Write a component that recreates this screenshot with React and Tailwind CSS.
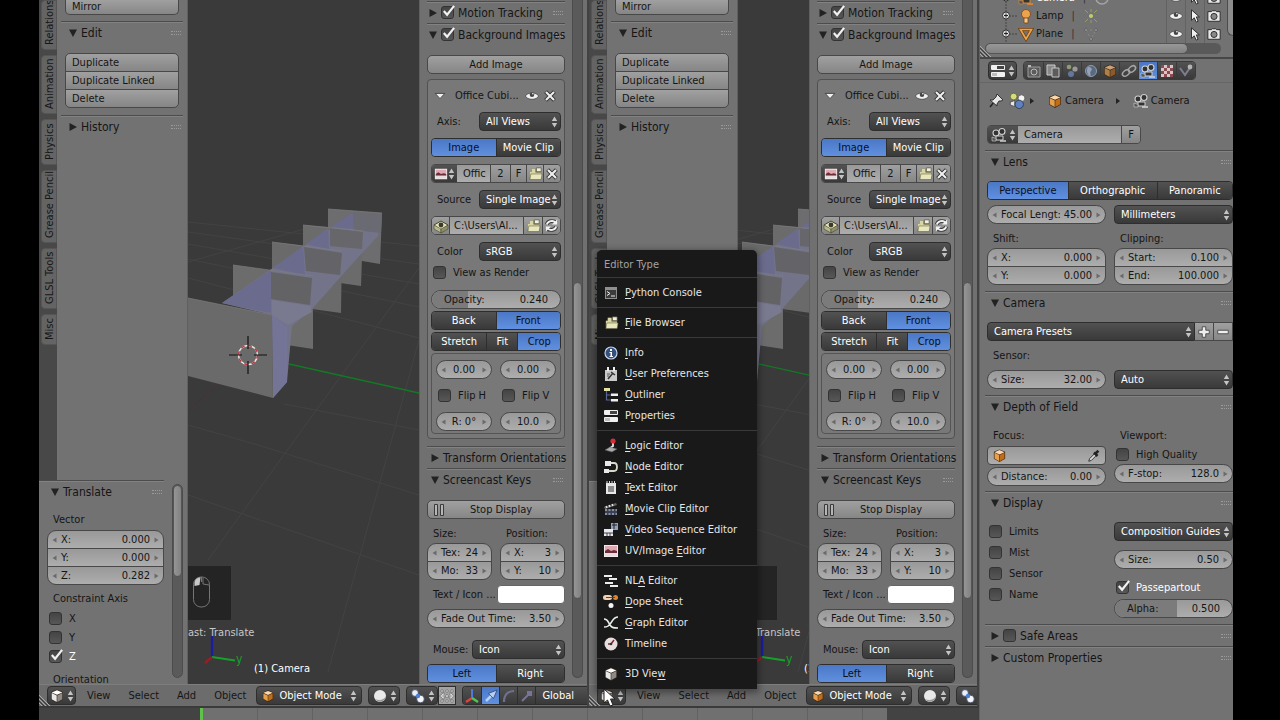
import React from 'react';

const darkBg = 'bg-linear-to-b from-[#525252] to-[#393939]';
const toolBg = 'bg-linear-to-b from-[#a0a0a0] to-[#868686]';
const fieldBg = 'bg-linear-to-b from-[#999999] to-[#adadad]';
const blueBg = 'bg-linear-to-b from-[#4a78c6] to-[#6190e0]';

/* ---------- icons ---------- */

const Svg = ({ children, size = 16 }) => (
  <svg width={size} height={size} viewBox="0 0 16 16" className="shrink-0" aria-hidden="true">
    {children}
  </svg>
);

const CubeIcon = ({ size = 16, top = '#f8d8ac', left = '#e9a04c', right = '#c06c18' }) => (
  <Svg size={size}>
    <path d="M8 1.5 14 4v7.5L8 15 2 11.5V4z" fill="#3a2a1a" />
    <path d="M8 2.2 13.3 4.4 8 6.8 2.7 4.4z" fill={top} />
    <path d="M2.7 5.1 7.7 7.4v6.6L2.7 11.2z" fill={left} />
    <path d="M13.3 5.1 8.3 7.4v6.6l5-2.8z" fill={right} />
  </Svg>
);

const ViewIcon = () => <CubeIcon top="#ffffff" left="#e8e8e8" right="#8a8a8a" />;

const UpDown = () => (
  <svg width="7" height="12" viewBox="0 0 7 12" className="shrink-0" aria-hidden="true">
    <path d="M3.5 0.5 6.2 5H0.8z M3.5 11.5 6.2 7H0.8z" fill="#c4c4c4" />
  </svg>
);

const EyeIcon = () => (
  <Svg size={14}>
    <path d="M0.500 8c2-4.500 13-4.500 15 0-2 5-13 5-15 0z" fill="#f2f2f2" stroke="#3a3a3a" strokeWidth="0.8" />
    <circle cx="8" cy="6.500" r="2.6" fill="#444" />
    <circle cx="9" cy="5.500" r="0.9" fill="#fff" />
  </Svg>
);

const CrossIcon = () => (
  <Svg size={14}>
    <path d="M3 3l10 10M13 3 3 13" stroke="#333" strokeWidth="4.5" />
    <path d="M3.4 3.4l9.2 9.2M12.6 3.4 3.4 12.6" stroke="#efefef" strokeWidth="2.4" />
  </Svg>
);

const FolderIcon = () => (
  <Svg size={15}>
    <path d="M2 14V6h2V3h5v2h5v9z" fill="#53523a" />
    <path d="M2 12V6h2V3h4v4h6v6H3z" fill="#d9d6a2" />
    <path d="M9 2h5v4H9z" fill="#f1f1e2" stroke="#55543f" strokeWidth="0.7" />
    <path d="M3 8.500h12l-1 6H2z" fill="#e9e7bd" stroke="#5f5e42" strokeWidth="0.6" />
  </Svg>
);

const RefreshIcon = () => (
  <Svg size={15}>
    <g fill="none" stroke="#3a3a3a" strokeWidth="4">
      <path d="M3 7c1-4 7-5 10-2M13 9c-1 4-7 5-10 2" />
    </g>
    <g fill="none" stroke="#f2f2f2" strokeWidth="2">
      <path d="M3 7c1-4 7-5 9-2M13 9c-1 4-7 5-9 2" />
    </g>
    <path d="M14 1.5V7H8.5zM2 14.500V9h5.500z" fill="#f2f2f2" />
  </Svg>
);

const ImageIcon = ({ size = 16 }) => (
  <Svg size={size}>
    <path d="M1 2h14v12H1z" fill="#f2e9ea" />
    <path d="M2 3h12v5H2z" fill="#e0a8b0" />
    <path d="M2 8l3-2 3 2 3-1 3 1v2H2z" fill="#6b2e3b" />
    <path d="M2 10h12v3H2z" fill="#e6dede" />
  </Svg>
);

const PackIcon = () => (
  <Svg size={16}>
    <path d="M1 7l7-4 7 4-7 6z" fill="#e4e4bd" stroke="#444431" />
    <path d="M1 7l7 4v4L1 11z" fill="#b9b98a" stroke="#444431" strokeWidth="0.6" />
    <path d="M15 7l-7 4v4l7-4z" fill="#8f8f68" stroke="#444431" strokeWidth="0.6" />
    <circle cx="8" cy="7" r="2.400" fill="#3a3a2c" />
  </Svg>
);

const CameraIcon = ({ size = 16, color = '#d0d0d0' }) => (
  <Svg size={size}>
    <circle cx="5" cy="6" r="3" fill="#333" stroke={color} strokeWidth="1.100" />
    <circle cx="11" cy="4.500" r="3" fill="#333" stroke={color} strokeWidth="1.100" />
    <path d="M5 9h7v4H5z" fill="#333" stroke={color} strokeWidth="1" />
    <path d="M1 10l4 1.500V14H1z" fill="#555" stroke={color} strokeWidth="0.600" />
    <path d="M9 14h6" stroke={color} strokeWidth="1.600" />
  </Svg>
);

const BallsIcon = ({ size = 16 }) => (
  <Svg size={size}>
    <circle cx="5" cy="5" r="3.400" fill="#e9eef7" stroke="#38445e" strokeWidth="0.8" />
    <circle cx="10.500" cy="11" r="3.800" fill="#f4f6fa" stroke="#38445e" strokeWidth="0.8" />
    <circle cx="8" cy="8" r="2.200" fill="#4f7fd0" />
  </Svg>
);

const SceneIcon = () => (
  <Svg size={18}>
    <circle cx="5" cy="4" r="3" fill="#d4dc7c" stroke="#5c6134" strokeWidth="0.7" />
    <path d="M2 9l4-1.500V13l-4-1.500z" fill="#e9e9e9" stroke="#444" strokeWidth="0.7" />
    <circle cx="12" cy="5.500" r="3" fill="#f4f4f4" stroke="#555" strokeWidth="0.7" />
    <circle cx="10" cy="11" r="3.700" fill="#5d82bf" stroke="#27344d" strokeWidth="0.7" />
  </Svg>
);

const PropsIcon = ({ size = 16 }) => (
  <Svg size={size}>
    <rect x="1" y="2" width="14" height="5" rx="1" fill="#f0f0f0" />
    <rect x="7" y="3" width="7" height="3" fill="#444" />
    <rect x="1" y="9" width="14" height="5" rx="1" fill="#f0f0f0" />
    <rect x="2" y="10" width="5" height="3" fill="#bdbdbd" />
  </Svg>
);

const menuIcons = {
  console: (
    <Svg>
      <path d="M2 2h12v12H2z" fill="#8f8f8f" />
      <path d="M3 5h10v8H3z" fill="#3c3c3c" />
      <path d="M4 6.500l3 2-3 2M8 11h4" stroke="#eee" fill="none" />
    </Svg>
  ),
  file: <FolderIcon />,
  info: (
    <Svg>
      <circle cx="8" cy="8" r="6" fill="#33507f" stroke="#c4d4ee" strokeWidth="1.200" />
      <path d="M7 4h2v2H7zM6.500 7H9v4h1v1H6.500v-1h1V8h-1z" fill="#fff" />
    </Svg>
  ),
  prefs: (
    <Svg>
      <path d="M2 4h12v11H2z" fill="#c9c9c9" />
      <path d="M4 1h2v4H4zM10 1h2v4h-2z" fill="#eee" />
      <path d="M5 13l5-6M8 6l4 3" stroke="#333" strokeWidth="1.500" />
      <path d="M4 8h3M4 10h2" stroke="#555" />
    </Svg>
  ),
  outliner: (
    <Svg>
      <path d="M1 1h6v3H1z" fill="#e6e2a4" />
      <path d="M3.500 4v9H8M3.500 8H8" stroke="#5c6794" strokeWidth="1.200" fill="none" />
      <path d="M8 6.500h7v2.500H8zM8 12h7v2.500H8z" fill="#f0f0f0" />
    </Svg>
  ),
  props: <PropsIcon />,
  logic: (
    <Svg>
      <path d="M10 4v4L6 11" stroke="#e8e8e8" strokeWidth="1.800" fill="none" />
      <path d="M2 12l5-3 7 2-5 3z" fill="#aaa" stroke="#555" strokeWidth="0.500" />
      <circle cx="10" cy="3" r="2.600" fill="#d22f3b" />
    </Svg>
  ),
  node: (
    <Svg>
      <path d="M2 2h6v5H2zM1 10h5v4H1z" fill="#e9e9e9" />
      <path d="M8 4h3c4 0 4 8 0 8H6" stroke="#d9d9c4" strokeWidth="1.800" fill="none" />
    </Svg>
  ),
  text: (
    <Svg>
      <path d="M3 3h10v11H3z" fill="#e8e8e8" />
      <path d="M4 1v3M6.500 1v3M9 1v3M11.500 1v3" stroke="#ddd" />
      <path d="M5 7h6M5 9h6M5 11h6" stroke="#333" />
    </Svg>
  ),
  clip: (
    <Svg>
      <path d="M1 6l12-4 1 2L2 8z" fill="#666" />
      <path d="M3 5l1 2M6 4l1 2M9 3l1 2" stroke="#eee" strokeWidth="1.300" />
      <path d="M2 8h12v6H2z" fill="#39415a" />
      <path d="M2 9h12M2 13h12" stroke="#ddd" strokeDasharray="2 1.500" />
    </Svg>
  ),
  sequence: (
    <Svg>
      <path d="M8 1h7v7H8z" fill="#93a0bd" />
      <path d="M9 3h5M11 1v6" stroke="#222" />
      <path d="M1 7h9v7H1z" fill="#e9e9f2" />
      <path d="M1 11h9M4 11v3M7 11v3" stroke="#444" />
    </Svg>
  ),
  image: <ImageIcon />,
  nla: (
    <Svg>
      <path d="M1 2h8v2H1zM6 5h8v2H6zM2 9h8v2H2zM7 12h8v2H7z" fill="#ececec" />
    </Svg>
  ),
  dope: (
    <Svg>
      <rect x="0" y="1" width="9" height="5" rx="2.500" fill="#f0d0b0" />
      <circle cx="12.500" cy="3.500" r="2.500" fill="#d98638" />
      <path d="M3 3.500h9" stroke="#6b3e14" />
      <circle cx="8" cy="11.500" r="2.500" fill="#f4f4f4" />
    </Svg>
  ),
  graph: (
    <Svg>
      <path d="M1 4c4 0 4 3 6 6s4 3 8 3M15 2c-5 0-5 4-8 7-1 2-3 3-6 3" stroke="#e9efe9" strokeWidth="1.600" fill="none" />
    </Svg>
  ),
  time: (
    <Svg>
      <circle cx="8" cy="8" r="6.500" fill="#e9dedf" />
      <path d="M8 8l3-4M8 8H5" stroke="#7c2b35" strokeWidth="1.500" />
      <circle cx="8" cy="8" r="1.300" fill="#333" />
    </Svg>
  ),
  view: <ViewIcon />,
};

/* ---------- controls ---------- */

const Arrow = ({ flip }) => (
  <svg width="5" height="6" viewBox="0 0 5 6" className={`shrink-0 ${flip ? 'rotate-180' : ''}`} aria-hidden="true">
    <path d="M4.500 0.500v5L0.500 3z" fill="#6a6a6a" />
  </svg>
);

const NumField = ({ label, value, name, center, round = 'rounded-full', className = '' }) => (
  <label
    className={`flex h-[19px] min-w-0 items-center gap-0.5 border border-[#484848] px-1 ${fieldBg} ${round} ${className}`}
  >
    <Arrow />
    {label && <span className="min-w-0 flex-1 pl-0.5 whitespace-nowrap">{label}</span>}
    <input
      type="text"
      defaultValue={value}
      aria-label={label ? undefined : name}
      style={label && !center ? { width: `${value.length}ch` } : undefined}
      className={`min-w-0 bg-transparent outline-none ${center ? 'w-full flex-1 text-center' : 'mr-0.5 shrink-0 text-right'}`}
    />
    <Arrow flip />
  </label>
);

const NumStack = ({ rows }) => (
  <div className="flex flex-col">
    {rows.map(([label, value], i) => (
      <NumField
        key={label}
        label={label}
        value={value}
        className={i > 0 ? '-mt-px' : ''}
        round={i === 0 ? 'rounded-t-[9px]' : i === rows.length - 1 ? 'rounded-b-[9px]' : 'rounded-none'}
      />
    ))}
  </div>
);

const Slider = ({ label, value, fill }) => (
  <label className={`relative flex h-[19px] items-center overflow-hidden rounded-full border border-[#484848] px-3 ${fieldBg}`}>
    <span className="absolute inset-y-0 left-0 bg-[#7b7b7b]" style={{ width: `${fill}%` }} />
    <span className="relative flex-1">{label}</span>
    <input
      type="text"
      defaultValue={value}
      className="relative w-10 bg-transparent text-right outline-none"
    />
  </label>
);

const Select = ({ value, name, className = '', round = 'rounded-[4px]' }) => (
  <div className={`flex h-[19px] min-w-0 items-center border border-[#2e2e2e] pr-0.5 pl-1.5 text-white ${darkBg} ${round} ${className}`}>
    <select aria-label={name} className="min-w-0 flex-1 appearance-none bg-transparent outline-none">
      <option>{value}</option>
    </select>
    <UpDown />
  </div>
);

const Toggle = ({ items, active }) => (
  <div className="flex h-[19px] shrink-0 overflow-hidden rounded-[4px] border border-[#2e2e2e]">
    {items.map((t) => (
      <button
        key={t}
        type="button"
        className={`flex-auto border-l border-[#2e2e2e] text-center whitespace-nowrap first:border-l-0 ${
          t === active ? `${blueBg} text-[#0a0f1c]` : `${darkBg} text-white`
        } ${items.length === 2 ? 'basis-0' : ''}`}
      >
        {t}
      </button>
    ))}
  </div>
);

const Check = ({ label, name, checked, lit }) => (
  <label className="flex h-[19px] items-center gap-[7px] whitespace-nowrap">
    <span className="relative flex h-[13px] w-[13px] shrink-0">
      <input
        type="checkbox"
        defaultChecked={checked}
        aria-label={label ? undefined : name}
        className="peer h-[13px] w-[13px] appearance-none rounded-[3px] border border-[#333] bg-linear-to-b from-[#444] to-[#575757]"
      />
      <svg
        viewBox="0 0 16 16"
        className="pointer-events-none absolute -top-0.5 left-0 hidden h-[15px] w-[15px] peer-checked:block"
        aria-hidden="true"
      >
        <path d="M3 7.500l3.500 4L14 2" fill="none" stroke="#f2f2f2" strokeWidth="2.300" />
      </svg>
    </span>
    {label && <span className={lit ? 'text-white' : ''}>{label}</span>}
  </label>
);

const PanelHeader = ({ title, closed, check, className = 'px-1' }) => (
  <div className={`relative flex h-[22px] shrink-0 items-center gap-1 border-t border-[#4c4c4c] text-[12px] shadow-[inset_0_1px_0_#828282] ${className}`}>
    <svg width="8" height="8" viewBox="0 0 8 8" className={`shrink-0 ${closed ? '-rotate-90' : ''}`} aria-hidden="true">
      <path d="M0 0.500h8L4 8z" fill="#222" />
    </svg>
    {check !== undefined && <Check name={title} checked={check} />}
    <span className="absolute right-0.5 bottom-2 h-[4px] w-[10px] border-y border-dotted border-[#9a9a9a]" />
    <h2 className="relative whitespace-nowrap">{title}</h2>
  </div>
);

const Scroll = ({ className, thumb }) => (
  <div className={`w-[11px] shrink-0 rounded-full border border-[#4c4c4c] bg-[#5a5a5a] ${className}`}>
    <div className={`w-full rounded-full border border-[#555] bg-linear-to-r from-[#959595] to-[#828282] ${thumb}`} />
  </div>
);

/* ---------- tool shelf ---------- */

const tabs = [
  ['Relations', 'h-[50px]'],
  ['Animation', 'h-[59px]'],
  ['Physics', 'h-[46px]'],
  ['Grease Pencil', 'h-[73px]'],
  ['GLSL Tools', 'h-[61px]'],
  ['Misc', 'h-[31px]'],
];

const ToolShelf = () => (
  <div className="flex w-[149px] shrink-0 flex-col overflow-hidden border-r border-[#606060]">
    <div className="flex min-h-0 flex-1">
      <div className="flex w-[18px] flex-col items-end gap-[5px] bg-[#484848]">
        {tabs.map(([name, height]) => (
          <button
            key={name}
            type="button"
            className={`w-4 shrink-0 rotate-180 overflow-hidden rounded-r-[4px] border border-[#555] bg-[#646464] pt-1 text-start leading-none whitespace-nowrap text-[#161616] [writing-mode:vertical-rl] ${height}`}
          >
            {name}
          </button>
        ))}
      </div>
      <div className="flex min-w-0 flex-1 flex-col px-1">
        <div className="px-1">
          <button type="button" className={`block h-[15px] w-full rounded-b-[5px] border border-t-0 border-[#484848] px-1.5 text-left leading-[12px] ${toolBg}`}>
            Mirror
          </button>
        </div>
        <div className="mt-1.5">
          <PanelHeader title="Edit" className="px-2" />
        </div>
        <div className="mt-2.5 mb-[7px] flex flex-col px-1">
          {['Duplicate', 'Duplicate Linked', 'Delete'].map((t) => (
            <button
              key={t}
              type="button"
              className={`-mb-px h-[19px] border border-[#484848] px-1.5 text-left first:rounded-t-[5px] last:mb-0 last:rounded-b-[5px] ${toolBg}`}
            >
              {t}
            </button>
          ))}
        </div>
        <PanelHeader title="History" closed className="px-2" />
      </div>
    </div>
    <div className="flex h-[204px] shrink-0 overflow-hidden">
      <div className="min-w-0 flex-1 pr-2">
        <PanelHeader title="Translate" className="px-3" />
        <div className="mt-2 flex flex-col pl-2">
          <p className="h-5 pl-1.5 leading-5">Vector</p>
          <NumStack rows={[['X:', '0.000'], ['Y:', '0.000'], ['Z:', '0.282']]} />
          <p className="mt-1 h-5 pl-1.5 leading-5">Constraint Axis</p>
          <div className="flex flex-col pl-0.5">
            <Check label="X" />
            <Check label="Y" />
            <Check label="Z" checked lit />
          </div>
          <p className="mt-1 pl-1.5 leading-5">Orientation</p>
        </div>
      </div>
      <Scroll className="mt-1 mr-1 mb-1.5" thumb="h-[92px]" />
    </div>
  </div>
);

/* ---------- 3D canvas ---------- */

const Scene = () => (
  <svg
    viewBox="0 0 231 684"
    preserveAspectRatio="xMidYMid slice"
    className="absolute inset-0 h-full w-full"
    aria-hidden="true"
  >
    <g stroke="#434343" strokeWidth="1" fill="none">
      <path d="M0 222 231 246M0 232 231 264M0 244 231 284M0 259 231 307M0 278 231 338M0 425 70 445 231 495M0 495 231 575M96 404 231 430M231 340 140 672M231 268 20 560M190 250 0 330M120 228 0 262" />
    </g>
    <path d="M101 364 231 393" stroke="#127a24" strokeWidth="1.300" />
    <path d="M0 410 30 385" stroke="#4a3234" />
    <path d="M140 209 194 213 192 264 174 261 160 240 140 228z" fill="#6d6d70" />
    <path d="M115 225 175 230 173 286 152 283 140 250 115 246z" fill="#6b6b6c" />
    <path d="M84 242 154 250 153 313 124 309 110 280 84 270z" fill="#6a6a6b" />
    <path d="M45 265 125 276 125 349 99 345 82 300 45 298z" fill="#6c6c6d" />
    <path d="M34 303 118 245 168 212 192 224 190 236 165 263 125 308 104 326 99 382 85 398 84 315z" fill="#73738a" />
    <path d="M34 303 83 270 83 313zM85 268 115 246 117 275zM118 244 140 228 141 249zM143 227 166 212 166 229z" fill="#6b6b8e" />
    <path d="M83 272 124 278 122 305 83 299z" fill="#636366" />
    <path d="M116 247 154 253 152 275 118 271z" fill="#646468" />
    <path d="M142 228 175 232 174 249 142 246z" fill="#66666b" />
    <path d="M165 212 194 214 193 233 166 230z" fill="#6a6a72" />
    <path d="M84 300 122 306 124 312 100 325 84 315z" fill="#797990" />
    <path d="M84 315 99 327 99 382 85 398z" fill="#747496" />
    <path d="M0 298 84 315 85 398 0 376z" fill="#6a6a6b" />
    <path d="M45 265 125 276M84 242 154 251M115 225 175 231M140 209 194 213M0 298 84 315" stroke="#7e7e7e" strokeWidth="0.700" fill="none" />
    <circle cx="60" cy="355" r="9.500" fill="none" stroke="#e8e8e8" strokeWidth="1.500" />
    <circle cx="60" cy="355" r="9.500" fill="none" stroke="#c23440" strokeWidth="1.500" strokeDasharray="3.730 3.730" />
    <path d="M41 355h13M66 355h13M60 336v13M60 361v13" stroke="#111" strokeWidth="1.200" />
  </svg>
);

const Canvas = ({ keysAt }) => (
  <div className="relative min-w-0 flex-1 overflow-hidden bg-[#3a3a3a]">
    <Scene />
    <div className={`absolute bottom-[43px] w-[72px] ${keysAt}`}>
      <div className="flex h-[54px] w-[43px] bg-[#242424] pt-[9px] pl-1">
        <svg width="20" height="34" viewBox="0 0 20 34" aria-hidden="true">
          <rect x="1.500" y="2" width="16" height="30" rx="7.500" fill="none" stroke="#757575" />
          <path d="M2.500 11V8c0-3 2-5.500 6-5.500L7.500 10z" fill="#c9c9c9" />
          <path d="M9.500 2v5M11 3v6l6 1" stroke="#757575" fill="none" />
        </svg>
      </div>
      <p className="h-[21px] pt-0.5 text-[11px] leading-[21px] whitespace-nowrap text-[#c8c8c8]">ast: Translate</p>
    </div>
    <svg width="44" height="36" viewBox="0 0 44 36" className="absolute bottom-[16px] left-2.5" aria-hidden="true">
      <path d="M14 25V4" stroke="#1c1c9c" strokeWidth="2.500" />
      <path d="M14 25 37 28.500" stroke="#17a02a" strokeWidth="2" />
      <path d="M14 25 7 31" stroke="#9c1c22" strokeWidth="2.500" />
    </svg>
    <span className="absolute bottom-[17px] left-12 text-[12px] leading-[16px] text-[#17a02a]">y</span>
    <span className="absolute bottom-[6px] left-[66px] text-[11px] leading-[18px] whitespace-nowrap text-white">(1) Camera</span>
  </div>
);

/* ---------- N panel ---------- */

const Row = ({ label, children }) => (
  <div className="flex items-center justify-between pl-1.5">
    <span className="whitespace-nowrap">{label}</span>
    {children}
  </div>
);

const ViewProps = () => (
  <div className="flex w-[168px] shrink-0 border-l border-[#606060] bg-[#707070]">
    <div className="ml-[7px] flex w-[138px] shrink-0 flex-col pt-px">
      <PanelHeader title="Motion Tracking" closed check className="px-0.5" />
      <PanelHeader title="Background Images" check className="px-0.5" />
      <button type="button" className={`mt-2.5 h-[19px] shrink-0 rounded-[5px] border border-[#484848] ${toolBg}`}>
        Add Image
      </button>
      <div className="mt-[5px] shrink-0 rounded-[4px] border border-[#515151] bg-[#787878] px-[3px] pt-1.5 pb-1">
        <div className="flex flex-col gap-[7px]">
          <div className="flex h-[19px] items-center pr-1 pl-0.5">
            <Svg size={14}>
              <path d="M2.500 5h11L8 11z" fill="#f0f0f0" stroke="#3a3a3a" />
            </Svg>
            <span className="ml-2 flex-1 whitespace-nowrap">Office Cubi...</span>
            <button type="button" aria-label="Show image"><EyeIcon /></button>
            <button type="button" aria-label="Remove image" className="ml-1"><CrossIcon /></button>
          </div>
          <Row label="Axis:"><Select name="Axis" value="All Views" className="w-[82px]" /></Row>
          <Toggle items={['Image', 'Movie Clip']} active="Image" />
          <div className={`flex h-[19px] overflow-hidden rounded-[4px] border border-[#484848] ${fieldBg}`}>
            <button type="button" aria-label="Browse image" className={`flex w-[25px] items-center justify-center ${darkBg}`}>
              <ImageIcon size={14} />
              <UpDown />
            </button>
            <input aria-label="Image name" defaultValue="Offic" className="w-8 min-w-0 flex-1 bg-transparent pl-1.5 outline-none" />
            <button type="button" className={`w-5 border-l border-[#484848] ${toolBg}`}>2</button>
            <button type="button" className={`w-4 border-l border-[#484848] ${toolBg}`}>F</button>
            <button type="button" aria-label="Open image" className={`flex w-[17px] items-center justify-center border-l border-[#484848] ${toolBg}`}><FolderIcon /></button>
            <button type="button" aria-label="Unlink image" className={`flex w-[17px] items-center justify-center border-l border-[#484848] ${toolBg}`}><CrossIcon /></button>
          </div>
          <Row label="Source"><Select name="Source" value="Single Image" className="w-[82px]" /></Row>
          <div className={`flex h-[19px] overflow-hidden rounded-[5px] border border-[#484848] ${fieldBg}`}>
            <button type="button" aria-label="Pack image" className={`flex w-[18px] items-center justify-center border-r border-[#484848] ${toolBg}`}><PackIcon /></button>
            <input aria-label="File path" defaultValue="C:\Users\Al..." className="min-w-0 flex-1 bg-transparent pl-1 outline-none" />
            <button type="button" aria-label="Browse files" className={`flex w-[19px] items-center justify-center border-l border-[#484848] ${toolBg}`}><FolderIcon /></button>
            <button type="button" aria-label="Reload" className={`flex w-[18px] items-center justify-center border-l border-[#484848] ${toolBg}`}><RefreshIcon /></button>
          </div>
          <Row label="Color"><Select name="Color" value="sRGB" className="w-[82px]" /></Row>
        </div>
        <div className="mt-0.5 mb-2 pl-0.5"><Check label="View as Render" /></div>
        <div className="flex flex-col gap-0.5">
          <Slider label="Opacity:" value="0.240" fill={28} />
          <Toggle items={['Back', 'Front']} active="Front" />
          <Toggle items={['Stretch', 'Fit', 'Crop']} active="Crop" />
          <div className="grid grid-cols-2 gap-x-2 gap-y-[7px] rounded-[4px] border border-[#555] px-1 pt-1.5 pb-0.5">
            <NumField name="Offset X" value="0.00" center />
            <NumField name="Offset Y" value="0.00" center />
            <div className="pl-0.5"><Check label="Flip H" /></div>
            <div className="pl-0.5"><Check label="Flip V" /></div>
            <NumField name="Rotation" value="R: 0°" center />
            <NumField name="Size" value="10.0" center />
          </div>
        </div>
      </div>
      <div className="mt-[7px] shrink-0">
        <PanelHeader title="Transform Orientations" closed />
        <PanelHeader title="Screencast Keys" />
      </div>
      <button type="button" className={`mt-2.5 flex h-[19px] shrink-0 items-center rounded-[5px] border border-[#484848] px-1.5 ${toolBg}`}>
        <svg width="10" height="12" viewBox="0 0 10 12" aria-hidden="true">
          <path d="M0.500 0.500h3v11h-3zM6.500 0.500h3v11h-3z" fill="#b5b5b5" stroke="#3a3a3a" />
        </svg>
        <span className="flex-1">Stop Display</span>
      </button>
      <div className="mt-[5px] grid shrink-0 grid-cols-2 gap-x-2">
        <p className="h-[19px] pl-1.5 leading-[19px]">Size:</p>
        <p className="h-[19px] pl-1.5 leading-[19px]">Position:</p>
        <NumStack rows={[['Tex:', '24'], ['Mo:', '33']]} />
        <NumStack rows={[['X:', '3'], ['Y:', '10']]} />
      </div>
      <div className="mt-[5px] flex shrink-0 items-center justify-between">
        <span className="pl-1.5 whitespace-nowrap">Text / Icon ...</span>
        <button type="button" aria-label="Text color" className="h-[19px] w-[68px] rounded-[4px] border border-[#666] bg-white" />
      </div>
      <div className="mt-[5px] shrink-0"><NumField label="Fade Out Time:" value="3.50" /></div>
      <div className="mt-3 mb-[5px] shrink-0">
        <Row label="Mouse:"><Select name="Mouse" value="Icon" className="w-[93px]" /></Row>
      </div>
      <Toggle items={['Left', 'Right']} active="Left" />
    </div>
    <Scroll className="mb-1.5 ml-[7px] rounded-t-none border-t-0 pt-[282px]" thumb="h-[317px]" />
  </div>
);

/* ---------- editor header ---------- */

const IconMenu = ({ label, className = 'w-[29px]', children }) => (
  <button type="button" aria-label={label} className={`flex h-[19px] shrink-0 items-center justify-evenly rounded-[4px] border border-[#2e2e2e] ${darkBg} ${className}`}>
    {children}
    <UpDown />
  </button>
);

const ViewHeader = () => (
  <div className="flex h-[22px] shrink-0 items-center overflow-hidden border-t border-[#7d7d7d] bg-[#6c6c6c] pl-2">
    <IconMenu label="Editor type"><ViewIcon /></IconMenu>
    <nav className="ml-[11px] flex shrink-0 gap-[18px] text-[#161616]">
      {['View', 'Select', 'Add', 'Object'].map((t) => (
        <button key={t} type="button">{t}</button>
      ))}
    </nav>
    <div className={`ml-2.5 flex h-[19px] w-[106px] shrink-0 items-center gap-1 rounded-[4px] border border-[#2e2e2e] px-1 text-white ${darkBg}`}>
      <CubeIcon size={14} />
      <select aria-label="Mode" className="min-w-0 flex-1 appearance-none bg-transparent outline-none">
        <option>Object Mode</option>
      </select>
      <UpDown />
    </div>
    <div className="ml-1.5 flex shrink-0 gap-1.5">
      <IconMenu label="Shading" className="w-8">
        <Svg>
          <circle cx="8" cy="8" r="6" fill="#e9e9e9" />
          <path d="M3 11a6 6 0 0 0 11-3c-2 4-7 5-11 3z" fill="#9a9a9a" />
        </Svg>
      </IconMenu>
      <div className="flex">
        <IconMenu label="Pivot" className="w-8"><BallsIcon /></IconMenu>
        <button type="button" aria-label="Manipulate centers" className="flex h-[19px] w-[18px] items-center justify-center border border-[#2e2e2e] bg-[#a4a4a4]">
          <Svg>
            <path d="M2 2h2v2H2zM7 2h2v2H7zM12 2h2v2h-2zM2 12h2v2H2zM7 12h2v2H7zM12 12h2v2h-2z" fill="#f3f3f3" stroke="#444" strokeWidth="0.500" />
            <path d="M0.500 8 5 4.500V7M15.500 8 11 4.500V7M0.500 8 5 11.500V9M15.500 8 11 11.500V9M6 9l2-3 2 3z" fill="#eee" stroke="#555" strokeWidth="0.600" />
          </Svg>
        </button>
      </div>
      <div className="flex h-[19px] overflow-hidden rounded-l-[4px] border border-r-0 border-[#2e2e2e] text-white">
        <button type="button" aria-label="Manipulator" className={`flex w-[18px] items-center justify-center ${darkBg}`}>
          <Svg>
            <path d="M8 10V1" stroke="#4f79d9" strokeWidth="2" />
            <path d="M8 10l-6 4" stroke="#df4040" strokeWidth="2.500" />
            <path d="M8 10l6 4" stroke="#52c452" strokeWidth="2.500" />
          </Svg>
        </button>
        <button type="button" aria-label="Translate" className={`flex w-[18px] items-center justify-center border-l border-[#2e2e2e] ${blueBg}`}>
          <Svg>
            <path d="M3 13l6-6" stroke="#b8d0f5" strokeWidth="2.500" />
            <path d="M5.500 5.500 14 2l-3.500 8.500z" fill="#b8d0f5" stroke="#24375c" strokeWidth="0.700" />
          </Svg>
        </button>
        <button type="button" aria-label="Rotate" className={`flex w-[18px] items-center justify-center border-l border-[#2e2e2e] ${darkBg}`}>
          <Svg>
            <path d="M3 14C3 7 7 3 13 3" stroke="#6f6f92" strokeWidth="2.200" fill="none" />
          </Svg>
        </button>
        <button type="button" aria-label="Scale" className={`flex w-[18px] items-center justify-center border-l border-[#2e2e2e] ${darkBg}`}>
          <Svg>
            <path d="M3 13l6-6" stroke="#75759a" strokeWidth="2" />
            <path d="M8 3h5v5H8z" fill="#75759a" />
          </Svg>
        </button>
        <select aria-label="Orientation" className={`w-[60px] appearance-none border-l border-[#2e2e2e] pl-1.5 outline-none ${darkBg}`}>
          <option>Global</option>
        </select>
      </div>
    </div>
  </div>
);

// diagonal drag handle in the corner of every editor
const CornerGrip = ({ className }) => (
  <svg width="12" height="12" viewBox="0 0 12 12" className={`absolute ${className}`} aria-hidden="true">
    <path d="M0 1 11 12M0 5 7 12M0 9 3 12" stroke="#b0b0b0" strokeWidth="0.900" />
    <path d="M0 3 9 12M0 7 5 12" stroke="#333" strokeWidth="0.900" />
  </svg>
);

const ViewEditor = ({ className, keysAt, children }) => (
  <section className={`relative flex min-w-0 flex-col border-r-2 border-[#424242] ${className}`}>
    <div className="flex min-h-0 flex-1 overflow-hidden">
      <ToolShelf />
      <Canvas keysAt={keysAt} />
      <ViewProps />
    </div>
    <ViewHeader />
    <CornerGrip className="bottom-0 left-0" />
    {children}
  </section>
);

/* ---------- editor type menu ---------- */

// [icon, text before the shortcut letter, shortcut letter, text after it]
const menuGroups = [
  [['console', '', 'P', 'ython Console']],
  [['file', '', 'F', 'ile Browser']],
  [
    ['info', '', 'I', 'nfo'],
    ['prefs', '', 'U', 'ser Preferences'],
    ['outliner', '', 'O', 'utliner'],
    ['props', 'P', 'r', 'operties'],
  ],
  [
    ['logic', '', 'L', 'ogic Editor'],
    ['node', '', 'N', 'ode Editor'],
    ['text', '', 'T', 'ext Editor'],
    ['clip', '', 'M', 'ovie Clip Editor'],
    ['sequence', '', 'V', 'ideo Sequence Editor'],
    ['image', 'UV/Image ', 'E', 'ditor'],
  ],
  [
    ['nla', 'NL', 'A', ' Editor'],
    ['dope', '', 'D', 'ope Sheet'],
    ['graph', '', 'G', 'raph Editor'],
    ['time', 'Timeline', '', ''],
  ],
  [['view', '3D Vie', 'w', '']],
];

const EditorMenu = () => (
  <div className="absolute bottom-[17px] left-2 z-10 w-[160px] rounded-t-[5px] bg-[#191919] pt-1 pb-[5px] text-[#e6e6e6] shadow-[0_2px_6px_2px_rgba(0,0,0,0.35)]">
    <p className="h-[19px] pl-[7px] leading-[21px] text-[#a3a3a3]">Editor Type</p>
    {menuGroups.map((group) => (
      <div key={group[0][0]}>
        <hr className="my-1 border-[#3a3a3a]" />
        {group.map(([icon, before, letter, after]) => (
          <button key={icon} type="button" className="flex h-[21px] w-full items-center pl-1.5 whitespace-nowrap">
            <span className="mr-1.5 flex w-4 justify-center">{menuIcons[icon]}</span>
            <span>
              {before}
              <span className="underline underline-offset-2">{letter}</span>
              {after}
            </span>
          </button>
        ))}
      </div>
    ))}
  </div>
);

/* ---------- timeline strip ---------- */

const Timeline = () => (
  <div className="flex h-[14px] shrink-0 border-t-2 border-[#3a3a3a] bg-[#434343]">
    <div className="w-[161px]" />
    <div className="w-[3px] bg-[#5fc24a]" />
    <div className="flex-1 bg-[#707070] bg-[repeating-linear-gradient(90deg,transparent_0_54px,#626262_54px_55px)]" />
    <div className="w-[92px] border-r-2 border-[#424242]" />
  </div>
);

/* ---------- outliner and properties ---------- */

const outlinerIcons = {
  Camera: <CameraIcon color="#e08a2c" />,
  Lamp: (
    <Svg>
      <circle cx="8" cy="6" r="4.500" fill="#eda24e" stroke="#7a4510" strokeWidth="0.800" />
      <path d="M6 10h4v5H6z" fill="#f3c58f" stroke="#7a4510" strokeWidth="0.800" />
    </Svg>
  ),
  Plane: (
    <Svg>
      <path d="M2.500 3.500h11L8 13z" fill="none" stroke="#6b3f10" strokeWidth="3.200" />
      <path d="M2.500 3.500h11L8 13z" fill="none" stroke="#eda24e" strokeWidth="1.700" />
    </Svg>
  ),
};

const dataIcons = {
  Camera: (
    <Svg>
      <circle cx="8" cy="8" r="6" fill="none" stroke="#a5a5a5" strokeWidth="1.500" />
    </Svg>
  ),
  Lamp: (
    <Svg>
      <circle cx="8" cy="8" r="2" fill="#c4cc72" />
      <path d="M2 2l3 3M11 11l3 3M14 2l-3 3M5 11l-3 3M8 1v3M8 12v3" stroke="#969b66" />
    </Svg>
  ),
  Plane: (
    <Svg>
      <path d="M3 4h10L8 13z" fill="none" stroke="#8a8a8a" strokeDasharray="2 2" />
      <path d="M2 3h2v2H2zM12 3h2v2h-2zM7 12h2v2H7z" fill="#bdbdbd" stroke="#444" strokeWidth="0.500" />
    </Svg>
  ),
};

const Outliner = () => (
  <div className="relative flex h-[59px] shrink-0 flex-col overflow-hidden border-b-2 border-[#474747]">
    <div className="flex h-[43px]">
      <div className="flex h-full min-w-0 flex-1 flex-col justify-end overflow-hidden">
        {['Camera', 'Lamp', 'Plane'].map((name) => (
          <div key={name} className="flex h-[18px] shrink-0 items-center pr-1 pl-5">
            <svg width="18" height="18" viewBox="0 0 18 18" className="shrink-0" aria-hidden="true">
              <path d="M6 0v18M9 9h9" stroke="#444" strokeDasharray="2 1" />
              <circle cx="6" cy="8.500" r="3.500" fill="#ddd" stroke="#333" />
              <path d="M4 8.500h4M6 6.500v4" stroke="#222" />
            </svg>
            {outlinerIcons[name]}
            <span className={`ml-0.5 ${name === 'Camera' ? 'text-white' : ''}`}>{name}</span>
            <span className="mx-2 text-[#333]">|</span>
            {dataIcons[name]}
            <div className="ml-auto flex h-full">
              <button type="button" aria-label={`${name} visibility`} className="flex w-[19px] items-center justify-center border-l border-[#626262]"><EyeIcon /></button>
              <button type="button" aria-label={`${name} selectable`} className="flex w-[19px] items-center justify-center border-l border-[#626262]">
                <Svg size={14}>
                  <path d="M4 1v12l3-3 2.500 5 2-1L9.500 9H13z" fill="#f0f0f0" stroke="#222" />
                </Svg>
              </button>
              <button type="button" aria-label={`${name} renderable`} className="flex w-[19px] items-center justify-center border-l border-[#626262]">
                <Svg size={14}>
                  <path d="M1 3h4l1-1h4l1 1h4v11H1z" fill="#e9e9e9" stroke="#222" />
                  <circle cx="8" cy="8.500" r="3.500" fill="#888" stroke="#222" />
                </Svg>
              </button>
            </div>
          </div>
        ))}
      </div>
      <div className="h-9 w-1.5 rounded-bl-[6px] border-b border-l border-[#4c4c4c] bg-[#8c8c8c]" />
    </div>
    <div className="mr-3 ml-[5px] h-[11px] rounded-full bg-[#595959]">
      <div className="h-full w-[86%] rounded-full border border-[#555] bg-linear-to-b from-[#989898] to-[#828282]" />
    </div>
    <CornerGrip className="bottom-0 left-0" />
  </div>
);

const propTabs = [
  ['Render', (
    <Svg key="r"><path d="M2 4h12v10H2z" fill="#5c5c5c" stroke="#9d9d9d" /><circle cx="8" cy="9" r="3" fill="none" stroke="#bbb" /><path d="M2 2h3v2H2z" fill="#bbb" /></Svg>
  )],
  ['Layers', (
    <Svg key="l"><path d="M2 2h8v10H2z" fill="#888" stroke="#ccc" /><path d="M7 5h7v9H7z" fill="#5c5c5c" stroke="#c4c4c4" /></Svg>
  )],
  ['Scene', (
    <Svg key="s"><circle cx="5" cy="4" r="2.300" fill="#8f9b74" /><circle cx="11" cy="6" r="2.600" fill="#9a9a9a" /><circle cx="7" cy="11" r="3" fill="#62779b" /></Svg>
  )],
  ['World', (
    <Svg key="w"><circle cx="8" cy="8" r="5.500" fill="#5b6980" stroke="#8f9db4" /><path d="M5 4c3 0 5 2 3 4s1 4-1 5C4 12 3 7 5 4z" fill="#95a1b4" /></Svg>
  )],
  ['Object', <CubeIcon key="o" top="#c9a27c" left="#b07f4c" right="#8a5a2a" />],
  ['Constraints', (
    <Svg key="c"><g fill="none" stroke="#a5a5a5" strokeWidth="1.600"><ellipse cx="5" cy="10" rx="4" ry="2.600" transform="rotate(-40 5 10)" /><ellipse cx="11" cy="6" rx="4" ry="2.600" transform="rotate(-40 11 6)" /></g></Svg>
  )],
  ['Data', <CameraIcon key="d" />],
  ['Texture', (
    <Svg key="t"><path d="M2 2h12v12H2z" fill="#d8c6c6" /><path d="M2 2h3v3H2zM8 2h3v3H8zM5 5h3v3H5zM11 5h3v3h-3zM2 8h3v3H2zM8 8h3v3H8zM5 11h3v3H5zM11 11h3v3h-3z" fill="#8c4a52" /></Svg>
  )],
  ['Physics', (
    <Svg key="p"><path d="M2 5l5 7 6-9" fill="none" stroke="#7d7d92" strokeWidth="2" /><circle cx="12" cy="4" r="2.400" fill="#b4b4b4" /></Svg>
  )],
];

const Crumb = () => (
  <svg width="5" height="8" viewBox="0 0 5 8" aria-hidden="true">
    <path d="M0 1v6l4-3z" fill="#222" />
  </svg>
);

const Properties = () => (
  <div className="flex min-h-0 flex-1 flex-col overflow-hidden">
    <div className="flex h-6 shrink-0 items-center gap-1.5 border-b border-[#666] pl-2">
      <IconMenu label="Editor type"><PropsIcon /></IconMenu>
      <div className="flex h-[19px] overflow-hidden rounded-[4px] border border-[#3a3a3a]">
        {propTabs.map(([name, icon]) => (
          <button
            key={name}
            type="button"
            aria-label={name}
            className={`flex w-[19px] items-center justify-center border-l border-[#3a3a3a] first:border-l-0 ${name === 'Data' ? blueBg : darkBg}`}
          >
            {icon}
          </button>
        ))}
      </div>
    </div>
    <div className="flex h-9 shrink-0 items-center pl-2">
      <Svg>
        <path d="M2 14l4-5" stroke="#222" strokeWidth="1.500" />
        <path d="M9 1l6 6-2 1-2 0-2 3 0 2-7-6 3 0 3-3z" fill="#e6e6e6" stroke="#333" />
      </Svg>
      <span className="mr-1 ml-1 flex"><SceneIcon /></span>
      <Crumb />
      <span className="mr-0.5 ml-3 flex"><CubeIcon /></span>
      <span>Camera</span>
      <span className="mr-3 ml-3"><Crumb /></span>
      <span className="mr-0.5 flex"><CameraIcon /></span>
      <span>Camera</span>
    </div>
    <div className="mt-1.5 mb-1.5 ml-[7px] flex h-[19px] w-[154px] shrink-0 overflow-hidden rounded-[4px] border border-[#484848]">
      <button type="button" aria-label="Browse camera" className={`flex w-[30px] items-center justify-center gap-0.5 ${darkBg}`}>
        <CameraIcon />
        <UpDown />
      </button>
      <input aria-label="Camera name" defaultValue="Camera" className={`min-w-0 flex-1 pl-1.5 outline-none ${fieldBg}`} />
      <button type="button" className={`w-[19px] border-l border-[#484848] ${toolBg}`}>F</button>
    </div>

    <div className="flex flex-col pl-[5px]">
      <PanelHeader title="Lens" className="px-1.5" />
      <div className="mt-[9px] mb-1.5 flex flex-col gap-[5px] pl-0.5">
        <Toggle items={['Perspective', 'Orthographic', 'Panoramic']} active="Perspective" />
        <div className="grid grid-cols-2 gap-x-2 gap-y-[5px]">
          <NumField label="Focal Lengt:" value="45.00" />
          <Select name="Lens unit" value="Millimeters" />
        </div>
        <div className="grid grid-cols-2 gap-x-2">
          <p className="h-[19px] pl-1.5 leading-[19px]">Shift:</p>
          <p className="h-[19px] pl-1.5 leading-[19px]">Clipping:</p>
          <NumStack rows={[['X:', '0.000'], ['Y:', '0.000']]} />
          <NumStack rows={[['Start:', '0.100'], ['End:', '100.000']]} />
        </div>
      </div>

      <PanelHeader title="Camera" className="px-1.5" />
      <div className="mt-[9px] mb-1.5 flex flex-col gap-[5px] pl-0.5">
        <div className="flex">
          <Select name="Camera presets" value="Camera Presets" round="rounded-l-[4px]" className="flex-1" />
          {['Add preset', 'Remove preset'].map((name) => (
            <button key={name} type="button" aria-label={name} className={`flex w-[19px] items-center justify-center border border-l-0 border-[#484848] ${toolBg}`}>
              <Svg size={14}>
                <path d={name === 'Add preset' ? 'M6 2h4v4h4v4h-4v4H6v-4H2V6h4z' : 'M2 6h12v4H2z'} fill="#efefef" stroke="#444" />
              </Svg>
            </button>
          ))}
        </div>
        <p className="h-[19px] pl-1.5 leading-[19px]">Sensor:</p>
        <div className="grid grid-cols-2 gap-x-2">
          <NumField label="Size:" value="32.00" />
          <Select name="Sensor fit" value="Auto" />
        </div>
      </div>

      <PanelHeader title="Depth of Field" className="px-1.5" />
      <div className="mt-[9px] mb-[5px] grid grid-cols-2 gap-x-2 pl-0.5">
        <div className="flex flex-col">
          <p className="h-5 pl-1.5 leading-5">Focus:</p>
          <div className={`flex h-[19px] items-center rounded-[4px] border border-[#484848] px-1 ${fieldBg}`}>
            <CubeIcon size={15} />
            <input aria-label="Focus object" className="min-w-0 flex-1 bg-transparent outline-none" />
            <Svg size={14}>
              <path d="M2 14l1-3 6-6 2 2-6 6z" fill="#ddd" stroke="#222" />
              <path d="M8 4l4 4M10 5l3-3" stroke="#222" strokeWidth="3" />
            </Svg>
          </div>
          <div className="mt-0.5"><NumField label="Distance:" value="0.00" /></div>
        </div>
        <div className="flex flex-col">
          <p className="h-[19px] pl-1.5 leading-[19px]">Viewport:</p>
          <div className="pl-0.5"><Check label="High Quality" /></div>
          <NumField label="F-stop:" value="128.0" />
        </div>
      </div>

      <PanelHeader title="Display" className="px-1.5" />
      <div className="mt-[9px] mb-1.5 grid grid-cols-2 gap-x-2 pl-0.5">
        <div className="flex flex-col gap-0.5 pl-0.5">
          <Check label="Limits" />
          <Check label="Mist" />
          <Check label="Sensor" />
          <Check label="Name" />
        </div>
        <div className="flex flex-col">
          <Select name="Composition guides" value="Composition Guides" />
          <div className="my-[9px]"><NumField label="Size:" value="0.50" /></div>
          <div className="mb-0.5 pl-0.5"><Check label="Passepartout" checked lit /></div>
          <Slider label="Alpha:" value="0.500" fill={53} />
        </div>
      </div>

      <PanelHeader title="Safe Areas" closed check={false} className="px-1.5" />
      <PanelHeader title="Custom Properties" closed className="px-1.5" />
    </div>
  </div>
);

export default function App() {
  return (
    <div className="h-screen overflow-hidden bg-black pr-[47px] pl-[39px] font-['DejaVu_Sans_Condensed','DejaVu_Sans',sans-serif] text-[11px] leading-[16px] text-[#151515]">
      <main className="flex h-full bg-[#727272]">
        <div className="flex min-w-0 flex-1 flex-col">
          <div className="flex min-h-0 flex-1">
            <ViewEditor className="flex-1" keysAt="left-0" />
            <ViewEditor className="w-[390px] shrink-0" keysAt="-left-1">
              <EditorMenu />
              <svg width="14" height="20" viewBox="0 0 14 20" className="absolute -bottom-0.5 left-3.5 z-20" aria-hidden="true">
                <path d="M1 1v14l3.500-3 2.500 6 3-1-2.500-6H12z" fill="#fff" stroke="#222" />
              </svg>
            </ViewEditor>
          </div>
          <Timeline />
        </div>
        <aside className="flex w-[254px] shrink-0 flex-col border-l border-[#606060]">
          <Outliner />
          <Properties />
        </aside>
      </main>
    </div>
  );
}
